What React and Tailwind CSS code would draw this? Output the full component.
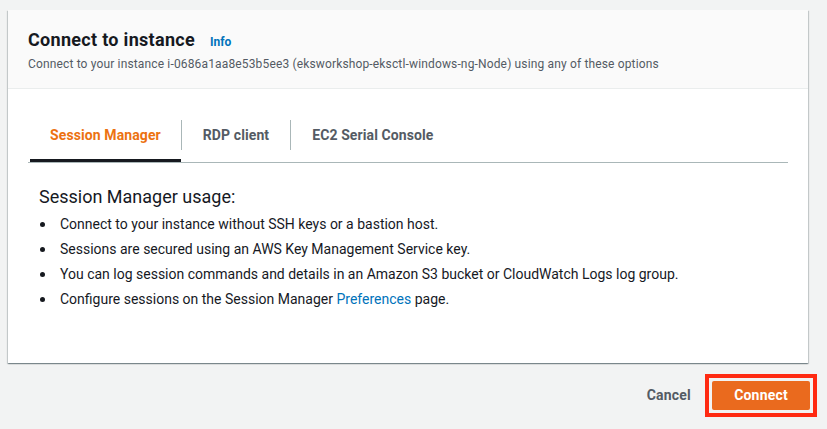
const font = { fontFamily: "Roboto, 'Noto Sans', sans-serif" };

const bullets = [
  "Connect to your instance without SSH keys or a bastion host.",
  "Sessions are secured using an AWS Key Management Service key.",
  "You can log session commands and details in an Amazon S3 bucket or CloudWatch Logs log group.",
];

const tabs = ["Session Manager", "RDP client", "EC2 Serial Console"];

export default function App() {
  return (
    <div
      className="h-[429px] w-[827px] overflow-hidden bg-[#f2f3f3] pl-2 pt-[10px] text-[#16191f]"
      style={font}
    >
      {/* CARD */}
      <div className="w-[800px] bg-white shadow-[0_1px_1px_0_rgba(0,28,36,0.3),1px_1px_1px_0_rgba(0,28,36,0.15),-1px_1px_1px_0_rgba(0,28,36,0.15)]">
        <div className="h-[79px] border-b border-[#eaeded] bg-[#fafafa] px-5 pt-[19px]">
          <div className="flex items-baseline gap-[15px]">
            <h2 className="text-[18px] font-bold leading-[22px] tracking-[0.3px]">Connect to instance</h2>
            <span className="text-[12px] font-bold text-[#0073bb]">Info</span>
          </div>
          <p className="mt-[5px] text-[12px] leading-4 tracking-[0.15px] text-[#545b64]">
            Connect to your instance i-0686a1aa8e53b5ee3 (eksworkshop-eksctl-windows-ng-Node) using any of
            these options
          </p>
        </div>

        <div className="h-[274px] px-5 pt-[19px]">
          {/* TABS */}
          <div className="flex h-[55px] border-b border-[#aab7b8] pl-[2px]">
            {tabs.map((t, i) => (
              <div key={t} className="relative flex items-center">
                {i > 0 && <span className="h-[30px] w-px bg-[#aab7b8]" />}
                <span
                  className={`text-[14px] font-bold tracking-[0.1px] ${
                    i === 0 ? "px-5 text-[#ec7211]" : "px-[21px] text-[#545b64]"
                  }`}
                >
                  {t}
                </span>
                {i === 0 && <span className="absolute bottom-0 left-0 right-0 h-[3px] bg-[#16191f]" />}
              </div>
            ))}
          </div>

          {/* CONTENT */}
          <div className="px-[11px] pt-[23px]">
            <h3 className="text-[18px] leading-[22px]">Session Manager usage:</h3>
            <ul className="mt-[4px] text-[14px]">
              {bullets.map((b) => (
                <li key={b} className="flex h-[25px] items-center">
                  <span className="mr-[15px] ml-[1px] h-[5px] w-[5px] rounded-full bg-[#16191f]" />
                  {b}
                </li>
              ))}
              <li className="flex h-[25px] items-center">
                <span className="mr-[15px] ml-[1px] h-[5px] w-[5px] rounded-full bg-[#16191f]" />
                <span>
                  Configure sessions on the Session Manager{" "}
                  <span className="text-[#0073bb]">Preferences</span> page.
                </span>
              </li>
            </ul>
          </div>
        </div>
      </div>

      {/* FOOTER */}
      <div className="mt-[11px] flex w-[809px] items-center justify-end">
        <button className="mr-[14px] text-[14px] font-bold tracking-[0.2px] text-[#545b64]">Cancel</button>
        <div className="border-[4px] border-[#ff2a12] p-[3px]">
          <button className="h-[29px] w-[98px] rounded-[2px] bg-[#ea6a1e] text-[14px] font-bold tracking-[0.2px] text-white">
            Connect
          </button>
        </div>
      </div>
    </div>
  );
}
